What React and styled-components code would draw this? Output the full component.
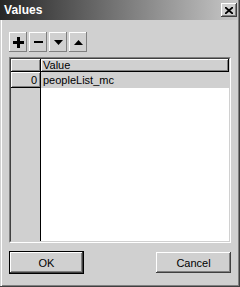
import React from "react";
import styled, { createGlobalStyle } from "styled-components";

const GlobalStyle = createGlobalStyle`
  body {
    margin: 0;
    background: #d0d0d0;
  }
`;

const Window = styled.div`
  width: 240px;
  height: 287px;
  box-sizing: border-box;
  background: #d0d0d0;
  border-right: 1px solid #404040;
  border-bottom: 1px solid #404040;
  box-shadow: inset -1px -1px #808080;
  display: flex;
  flex-direction: column;
  font-family: "Liberation Sans", Arial, sans-serif;
  font-size: 11px;
  color: #000;
`;

const TitleBar = styled.div`
  height: 20px;
  margin-right: 1px;
  display: flex;
  align-items: center;
  justify-content: space-between;
  padding: 0 1px 0 4px;
  background: linear-gradient(90deg, #262626, #c8c8c8);
`;

const Title = styled.span`
  color: #fff;
  font-weight: bold;
  font-size: 12px;
  letter-spacing: 0.1px;
`;

const RaisedButton = styled.button`
  box-sizing: border-box;
  padding: 0;
  margin: 0;
  border: none;
  background: #d0d0d0;
  display: flex;
  align-items: center;
  justify-content: center;
  font-family: inherit;
  font-size: 11px;
  color: #000;
  box-shadow: inset -1px -1px #404040, inset 1px 1px #fff,
    inset -2px -2px #808080;
`;

const CloseButton = styled(RaisedButton)`
  width: 16px;
  height: 14px;
`;

const Body = styled.div`
  flex: 1;
  display: flex;
  flex-direction: column;
  padding: 12px 8px 0 9px;
  box-shadow: inset 1px 0 #d0d0d0, inset 2px 0 #fff;
`;

const Toolbar = styled.div`
  display: flex;
  gap: 2px;
  height: 20px;
  margin-bottom: 5px;
`;

const ToolButton = styled(RaisedButton)`
  width: 18px;
  height: 20px;
  box-shadow: inset -1px -1px #808080, inset 1px 1px #fff;
`;

const GridOuter = styled.div`
  height: 186px;
  box-sizing: border-box;
  border-style: solid;
  border-width: 1px;
  border-color: #808080 #fff #fff #808080;
`;

const GridInner = styled.div`
  height: 100%;
  box-sizing: border-box;
  border-style: solid;
  border-width: 1px;
  border-color: #404040 #d0d0d0 #d0d0d0 #404040;
  display: grid;
  grid-template-columns: 30px 1fr;
  grid-template-rows: 13px 16px 1fr;
  background: #fff;
`;

const HeadCell = styled.div`
  box-sizing: border-box;
  background: #d0d0d0;
  border-right: 1px solid #000;
  border-bottom: 1px solid #000;
  box-shadow: inset 1px 1px #fff, inset -1px -1px #808080;
  display: flex;
  align-items: center;
  justify-content: ${(p) => (p.$right ? "flex-end" : "flex-start")};
  padding: ${(p) => (p.$right ? "0 3px 0 0" : "0 0 0 2px")};
  white-space: nowrap;
  overflow: hidden;
`;

const DataCell = styled.div`
  background: ${(p) => (p.$selected ? "#d0d0d0" : "#fff")};
  display: flex;
  align-items: center;
  padding-left: 2px;
  white-space: nowrap;
`;

const RowGutter = styled.div`
  background: #d0d0d0;
  border-right: 1px solid #000;
`;

const Footer = styled.div`
  display: flex;
  justify-content: space-between;
  align-items: center;
  margin-top: 8px;
  height: 23px;
`;

const DialogButton = styled(RaisedButton)`
  width: 75px;
  height: ${(p) => (p.$default ? "23px" : "21px")};
  ${(p) => p.$default && "border: 1px solid #000;"}
`;

const PlusIcon = () => (
  <svg width="11" height="11" viewBox="0 0 11 11">
    <rect x="4" y="0" width="3" height="11" fill="#000" />
    <rect x="0" y="4" width="11" height="3" fill="#000" />
  </svg>
);

const MinusIcon = () => (
  <svg width="9" height="3" viewBox="0 0 9 3">
    <rect x="0" y="0" width="9" height="2" fill="#000" />
  </svg>
);

const TriangleIcon = ({ up }) => (
  <svg width="9" height="5" viewBox="0 0 9 5">
    <polygon
      points={up ? "4.5,0 9,5 0,5" : "0,0 9,0 4.5,5"}
      fill="#000"
    />
  </svg>
);

const CloseIcon = () => (
  <svg width="8" height="7" viewBox="0 0 8 7">
    <path d="M0 0 L8 7 M8 0 L0 7" stroke="#000" strokeWidth="1.8" />
  </svg>
);

const rows = [{ index: 0, value: "peopleList_mc" }];

const App = () => {
  return (
    <>
      <GlobalStyle />
      <Window>
        <TitleBar>
          <Title>Values</Title>
          <CloseButton>
            <CloseIcon />
          </CloseButton>
        </TitleBar>
        <Body>
          <Toolbar>
            <ToolButton>
              <PlusIcon />
            </ToolButton>
            <ToolButton>
              <MinusIcon />
            </ToolButton>
            <ToolButton>
              <TriangleIcon />
            </ToolButton>
            <ToolButton>
              <TriangleIcon up />
            </ToolButton>
          </Toolbar>
          <GridOuter>
            <GridInner>
              <HeadCell />
              <HeadCell>Value</HeadCell>
              {rows.map((r) => (
                <React.Fragment key={r.index}>
                  <HeadCell $right>{r.index}</HeadCell>
                  <DataCell $selected>{r.value}</DataCell>
                </React.Fragment>
              ))}
              <RowGutter />
              <DataCell />
            </GridInner>
          </GridOuter>
          <Footer>
            <DialogButton $default>OK</DialogButton>
            <DialogButton>Cancel</DialogButton>
          </Footer>
        </Body>
      </Window>
    </>
  );
};

export default App;
